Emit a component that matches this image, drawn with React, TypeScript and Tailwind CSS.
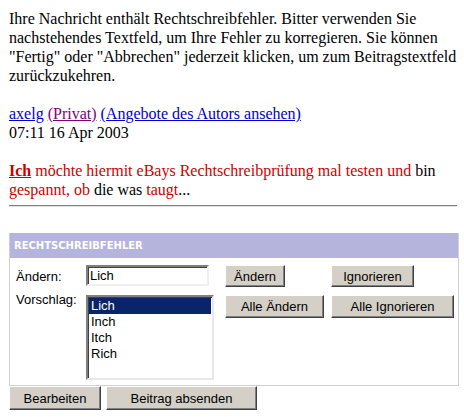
export default function App() {
  const btn =
    "h-full bg-[#d4d0c8] border border-t-white border-l-white border-r-[#404040] border-b-[#404040] shadow-[inset_-1px_-1px_0_#808080] text-[13px] text-black font-['Liberation_Sans',Arial,sans-serif] leading-none";

  return (
    <div className="min-h-[417px] w-[464px] bg-white pl-[9px] pr-[5px] pt-[9px] font-['Liberation_Serif','Times_New_Roman',serif] text-[16px] leading-[19px] text-black">
      <p>
        Ihre Nachricht enthält Rechtschreibfehler. Bitter verwenden Sie
        <br />
        nachstehendes Textfeld, um Ihre Fehler zu korregieren. Sie können
        <br />
        "Fertig" oder "Abbrechen" jederzeit klicken, um zum Beitragstextfeld
        <br />
        zurückzukehren.
      </p>

      <p className="mt-[19px]">
        <a className="text-[#0000cc] underline">axelg</a>{" "}
        <a className="text-[#800080] underline">(Privat)</a>{" "}
        <a className="text-[#0000cc] underline">(Angebote des Autors ansehen)</a>
        <br />
        07:11 16 Apr 2003
      </p>

      <p className="mt-[19px] text-[#cc0000]">
        <span className="font-bold underline">Ich</span> möchte hiermit eBays
        Rechtschreibprüfung mal testen und <span className="text-black">bin</span>
        <br />
        gespannt, <span>ob</span> <span className="text-black">die was</span>{" "}
        taugt<span className="text-black">...</span>
      </p>

      <div className="mt-[6px] w-[448px] h-[2px] border-t border-[#808080] border-b border-b-[#e0e0e0]" />

      <div className="mt-[26px] w-[450px] border border-[#d0d0d0] border-t-0">
        <div className="h-[25px] bg-[#b4b4dc] pl-[4px] flex items-center font-['DejaVu_Sans',Verdana,sans-serif] text-[10px] font-bold text-white">
          RECHTSCHREIBFEHLER
        </div>
        <div className="flex pl-[6px] pt-[7px] pb-[5px] font-['Liberation_Sans',Arial,sans-serif] text-[13px] text-black">
          <div className="w-[70px] flex flex-col">
            <div className="h-[22px] flex items-center">Ändern:</div>
            <div className="mt-[4px] leading-[18px]">Vorschlag:</div>
          </div>
          <div className="flex flex-col">
            <div className="w-[123px] h-[21px] border-2 border-t-[#808080] border-l-[#808080] border-r-[#f0f0f0] border-b-[#f0f0f0] shadow-[inset_1px_1px_0_#404040] bg-white pl-[2px] flex items-center">
              Lich
            </div>
            <div className="mt-[9px] w-[128px] h-[85px] border-2 border-t-[#808080] border-l-[#808080] border-r-[#e8e8e8] border-b-[#e8e8e8] shadow-[inset_1px_1px_0_#404040] bg-white pt-[1px] px-[1px]">
              <div className="bg-[#0a246a] text-white h-[16px] leading-[16px] pl-[2px]">
                Lich
              </div>
              <div className="h-[16px] leading-[16px] pl-[2px]">Inch</div>
              <div className="h-[16px] leading-[16px] pl-[2px]">Itch</div>
              <div className="h-[16px] leading-[16px] pl-[2px]">Rich</div>
            </div>
          </div>
          <div className="ml-[11px] flex flex-col">
            <div className="h-[22px] flex">
              <button className={`${btn} w-[60px]`}>Ändern</button>
              <button className={`${btn} ml-[46px] w-[83px]`}>Ignorieren</button>
            </div>
            <div className="mt-[8px] h-[23px] flex">
              <button className={`${btn} w-[99px]`}>Alle Ändern</button>
              <button className={`${btn} ml-[7px] w-[123px]`}>Alle Ignorieren</button>
            </div>
          </div>
        </div>
      </div>

      <div className="flex h-[24px] gap-[5px]">
        <button className={`${btn} w-[92px]`}>Bearbeiten</button>
        <button className={`${btn} w-[151px]`}>Beitrag absenden</button>
      </div>
    </div>
  );
}
